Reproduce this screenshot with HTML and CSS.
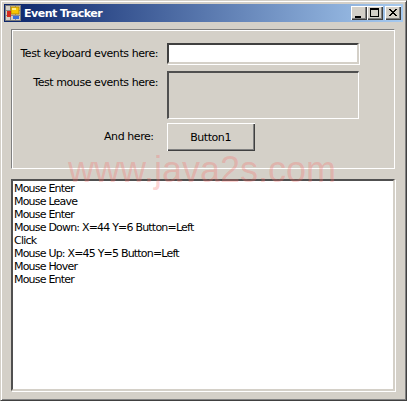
FILE: index.html
```html
<!DOCTYPE html>
<html lang="en">
<head>
<meta charset="utf-8">
<title>Event Tracker</title>
<link rel="stylesheet" href="styles.css">
</head>
<body>
<div class="window">
  <div class="titlebar">
    <svg class="app-icon" width="16" height="16" viewBox="0 0 16 16">
      <rect x="0.5" y="0.5" width="15" height="15" fill="#d4d0c8" stroke="#7b7b7b"/>
      <path d="M1 5.5H15M1 10.5H15M5.5 1V15M10.5 1V15" stroke="#8a8a8a" stroke-width="1"/>
      <rect x="6" y="2" width="8" height="7" fill="#f7c600" stroke="#b98a00" stroke-width="1"/>
      <rect x="7" y="3" width="4" height="2" fill="#ffee88"/>
      <rect x="2" y="6" width="4" height="6" fill="#d42a1c"/>
      <rect x="8" y="11" width="6" height="3" fill="#3a6fd8"/>
    </svg>
    <span class="title">Event Tracker</span>
    <div class="controls">
      <div class="ctl">
        <svg width="16" height="14" viewBox="0 0 16 14"><rect x="4" y="10" width="6" height="2" fill="#000"/></svg>
      </div>
      <div class="ctl">
        <svg width="16" height="14" viewBox="0 0 16 14"><path d="M3 2H12V11H3Z M4 4V10H11V4Z" fill="#000" fill-rule="evenodd"/></svg>
      </div>
      <div class="ctl ctl-close">
        <svg width="16" height="14" viewBox="0 0 16 14"><path d="M4 3L11 10M5 3L12 10M11 3L4 10M12 3L5 10" stroke="#000" stroke-width="1" shape-rendering="crispEdges"/></svg>
      </div>
    </div>
  </div>
  <div class="client">
    <div class="group">
      <div class="row row-key">
        <label class="lbl lbl-key">Test keyboard events here:</label>
        <div class="textbox"></div>
      </div>
      <div class="row row-mouse">
        <label class="lbl lbl-mouse">Test mouse events here:</label>
        <div class="mousebox"></div>
      </div>
      <div class="row row-btn">
        <label class="lbl lbl-and">And here:</label>
        <button class="btn" type="button">Button1</button>
      </div>
    </div>
    <div class="log">
      <div>Mouse Enter</div>
      <div>Mouse Leave</div>
      <div>Mouse Enter</div>
      <div>Mouse Down: X=44 Y=6 Button=Left</div>
      <div>Click</div>
      <div>Mouse Up: X=45 Y=5 Button=Left</div>
      <div>Mouse Hover</div>
      <div>Mouse Enter</div>
    </div>
  </div>
  <div class="watermark">www.java2s.com</div>
</div>
</body>
</html>
```
FILE: styles.css
```css
* { box-sizing: border-box; }
html, body { margin: 0; padding: 0; }
body { width: 407px; height: 401px; overflow: hidden; background: #d4d0c8; }

.window {
  position: relative;
  width: 407px;
  height: 401px;
  background: #d4d0c8;
  border: 1px solid;
  border-color: #d4d0c8 #404040 #404040 #d4d0c8;
  box-shadow: inset 1px 1px 0 #fff, inset -1px -1px 0 #808080;
  padding: 3px;
  font-family: "DejaVu Sans", sans-serif;
  font-size: 11px;
  color: #000;
  display: flex;
  flex-direction: column;
}

.titlebar {
  height: 18px;
  flex: none;
  background: linear-gradient(90deg, #0a246a, #a6caf0);
  display: flex;
  align-items: center;
  padding: 0 2px 0 1px;
}
.app-icon { flex: none; display: block; }
.title {
  margin-left: 3px;
  color: #fff;
  font-family: "DejaVu Sans", sans-serif;
  font-weight: 700;
  font-size: 11px;
  letter-spacing: -0.5px;
}
.controls { margin-left: auto; display: flex; }
.ctl {
  width: 16px;
  height: 14px;
  background: #d4d0c8;
  box-shadow: inset 1px 1px 0 #fff, inset -1px -1px 0 #404040, inset -2px -2px 0 #808080;
}
.ctl svg { display: block; }
.ctl-close { margin-left: 2px; }

.client {
  flex: 1;
  display: flex;
  flex-direction: column;
  padding: 7px 8px 6px 7px;
  gap: 10px;
}

.group {
  height: 140px;
  flex: none;
  border: 1px solid;
  border-color: #808080 #fff #fff #808080;
  box-shadow: inset 1px 1px 0 #fff;
  padding: 13px 35px 0 0;
  display: flex;
  flex-direction: column;
}
.row { display: flex; justify-content: flex-end; }
.lbl { white-space: nowrap; letter-spacing: -0.43px; }
.lbl-key { margin-right: 9px; line-height: 21px; }
.lbl-mouse { margin-right: 9px; padding-top: 5px; }
.lbl-and { margin-right: 13px; line-height: 28px; }
.row-btn { justify-content: flex-start; padding-left: 92px; margin-top: 4px; }
.row-mouse { margin-top: 7px; }

.textbox {
  width: 192px;
  height: 21px;
  flex: none;
  background: #fff;
  border: 2px solid;
  border-color: #404040 #d4d0c8 #d4d0c8 #404040;
  box-shadow: 1px 1px 0 #fff;
}
.mousebox {
  width: 192px;
  height: 48px;
  flex: none;
  background: #d4d0c8;
  border-style: solid;
  border-width: 2px 1px 1px 2px;
  border-color: #505050 #fff #fff #505050;
}
.btn {
  width: 88px;
  height: 28px;
  margin: 0;
  padding: 0;
  background: #d4d0c8;
  border: 0;
  border-radius: 0;
  font: inherit;
  letter-spacing: -0.45px;
  color: #000;
  box-shadow: inset 1px 1px 0 #fff, inset -1px -1px 0 #404040, inset -2px -2px 0 #808080;
}

.log {
  flex: 1;
  background: #fff;
  border: 2px solid;
  border-color: #505050 #d4d0c8 #d4d0c8 #505050;
  box-shadow: 1px 1px 0 #fff;
  padding: 1px;
  line-height: 13px;
  letter-spacing: -0.8px;
}

.watermark {
  position: absolute;
  left: 67px;
  top: 148px;
  font-family: "Liberation Sans", sans-serif;
  font-size: 36px;
  line-height: 42px;
  color: rgba(250, 110, 105, 0.3);
  white-space: nowrap;
  pointer-events: none;
}
```
